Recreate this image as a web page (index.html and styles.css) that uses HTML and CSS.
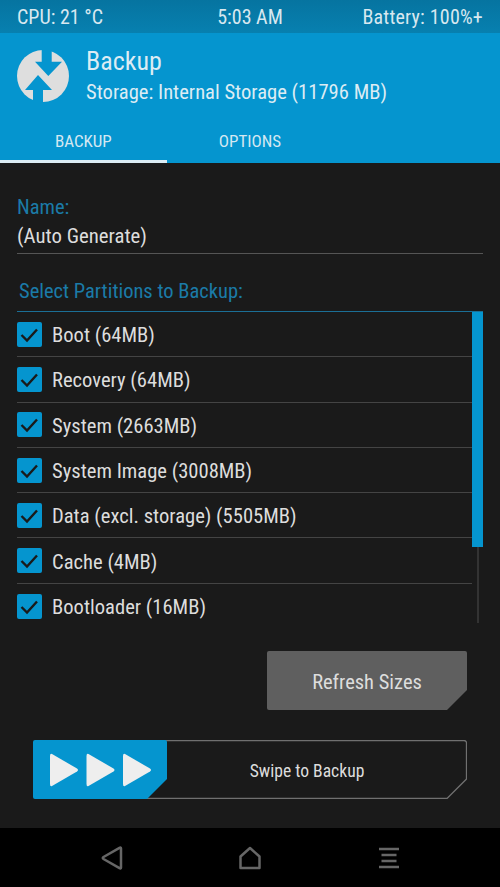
FILE: index.html
```html
<!DOCTYPE html>
<html lang="en">

<head>
    <meta charset="UTF-8">
    <title>TWRP Backup</title>
    <link rel="stylesheet" href="styles.css">
</head>

<body>
    <div class="app">

        <!-- Status bar -->
        <div class="status-bar">
            <span class="status-cell">CPU: 21 °C</span>
            <span class="status-cell status-center">5:03 AM</span>
            <span class="status-cell status-right">Battery: 100%+</span>
        </div>

        <!-- Header -->
        <div class="header">
            <svg class="logo" viewBox="0 0 52 52">
                <circle cx="26" cy="26" r="26" fill="#dedede" />
                <path d="M24.700 -1H34.700V11.700H45L31.300 26 18 11.700H24.700Z" fill="#0595cf" />
                <path d="M16 53H26V40H35L21 25 8 40H16Z" fill="#0595cf" />
            </svg>
            <div class="header-text">
                <div class="header-title">Backup</div>
                <div class="header-sub">Storage: Internal Storage (11796 MB)</div>
            </div>
        </div>

        <!-- Tabs -->
        <div class="tabs">
            <div class="tab tab-active">BACKUP</div>
            <div class="tab">OPTIONS</div>
            <div class="tab"></div>
        </div>

        <!-- Content -->
        <div class="content">
            <div class="field-label">Name:</div>
            <div class="field-value">(Auto Generate)</div>

            <div class="list-title">Select Partitions to Backup:</div>

            <div class="list">
                <div class="rows">
                    <div class="row">
                        <svg class="check" viewBox="0 0 25 25"><rect width="25" height="25" rx="2" fill="#0595cf" /><path d="M4.500 13l5.500 5.500L20 7.500" fill="none" stroke="#1a1a1a" stroke-width="2.400" /></svg>
                        <span>Boot (64MB)</span>
                    </div>
                    <div class="row">
                        <svg class="check" viewBox="0 0 25 25"><rect width="25" height="25" rx="2" fill="#0595cf" /><path d="M4.500 13l5.500 5.500L20 7.500" fill="none" stroke="#1a1a1a" stroke-width="2.400" /></svg>
                        <span>Recovery (64MB)</span>
                    </div>
                    <div class="row">
                        <svg class="check" viewBox="0 0 25 25"><rect width="25" height="25" rx="2" fill="#0595cf" /><path d="M4.500 13l5.500 5.500L20 7.500" fill="none" stroke="#1a1a1a" stroke-width="2.400" /></svg>
                        <span>System (2663MB)</span>
                    </div>
                    <div class="row">
                        <svg class="check" viewBox="0 0 25 25"><rect width="25" height="25" rx="2" fill="#0595cf" /><path d="M4.500 13l5.500 5.500L20 7.500" fill="none" stroke="#1a1a1a" stroke-width="2.400" /></svg>
                        <span>System Image (3008MB)</span>
                    </div>
                    <div class="row">
                        <svg class="check" viewBox="0 0 25 25"><rect width="25" height="25" rx="2" fill="#0595cf" /><path d="M4.500 13l5.500 5.500L20 7.500" fill="none" stroke="#1a1a1a" stroke-width="2.400" /></svg>
                        <span>Data (excl. storage) (5505MB)</span>
                    </div>
                    <div class="row">
                        <svg class="check" viewBox="0 0 25 25"><rect width="25" height="25" rx="2" fill="#0595cf" /><path d="M4.500 13l5.500 5.500L20 7.500" fill="none" stroke="#1a1a1a" stroke-width="2.400" /></svg>
                        <span>Cache (4MB)</span>
                    </div>
                    <div class="row row-last">
                        <svg class="check" viewBox="0 0 25 25"><rect width="25" height="25" rx="2" fill="#0595cf" /><path d="M4.500 13l5.500 5.500L20 7.500" fill="none" stroke="#1a1a1a" stroke-width="2.400" /></svg>
                        <span>Bootloader (16MB)</span>
                    </div>
                </div>
                <div class="scroll-track">
                    <div class="scroll-thumb"></div>
                    <div class="scroll-rest"></div>
                </div>
            </div>

            <div class="actions">
                <div class="refresh-btn">Refresh Sizes</div>
            </div>

            <div class="swipe">
                <svg class="swipe-outline" viewBox="0 0 434 59">
                    <path d="M4 .5H431a2.500 2.500 0 0 1 2.500 2.500V39L414 58.500H4Z" fill="none" stroke="#707070" stroke-width="1.300" />
                </svg>
                <div class="swipe-thumb">
                    <svg class="arrows" viewBox="0 0 102 36">
                        <path d="M2 2L27 16.500Q29 18 27 19.500L2 34Q0 35 0 32V4Q0 1 2 2Z" fill="#eee" />
                        <path d="M38.500 2L63.500 16.500Q65.500 18 63.500 19.500L38.500 34Q36.500 35 36.500 32V4Q36.500 1 38.500 2Z" fill="#eee" />
                        <path d="M75 2L100 16.500Q102 18 100 19.500L75 34Q73 35 73 32V4Q73 1 75 2Z" fill="#eee" />
                    </svg>
                </div>
                <div class="swipe-label">Swipe to Backup</div>
            </div>
        </div>

        <!-- Navigation -->
        <div class="nav">
            <svg class="nav-icon" viewBox="0 0 24 24"><path d="M21 2.500V21.500Q21 23 19.500 22.200L3.500 13Q2 12 3.500 11L19.500 1.800Q21 1 21 2.500Z" fill="none" stroke="#666" stroke-width="2.500" stroke-linejoin="round" /></svg>
            <svg class="nav-icon" viewBox="0 0 24 24"><path d="M12 2L21.500 10.500V22H2.500V10.500Z" fill="none" stroke="#666" stroke-width="2.500" stroke-linejoin="round" /></svg>
            <svg class="nav-icon" viewBox="0 0 24 24"><path d="M2 3H22M4.500 9H19.500M4.500 15H19.500M2 21H22" fill="none" stroke="#666" stroke-width="2.500" /></svg>
        </div>

    </div>
</body>

</html>
```

FILE: styles.css
```css
body {
    margin: 0;
    background-color: #1a1a1a;
    font-family: Roboto, "Liberation Sans", sans-serif;
    font-stretch: 85%;
}

.app {
    width: 500px;
    height: 887px;
    display: flex;
    flex-direction: column;
    overflow: hidden;
}

.status-bar {
    height: 33px;
    padding: 0 17px;
    display: flex;
    align-items: center;
    background: linear-gradient(#0674a0, #0780b0);
    color: #d8e8f0;
    font-size: 20px;
}

.status-cell {
    flex: 1;
}

.status-center {
    text-align: center;
}

.status-right {
    text-align: right;
    letter-spacing: 0.2px;
}

.header {
    height: 86px;
    padding-left: 17px;
    display: flex;
    align-items: center;
    gap: 17px;
    background-color: #0595cf;
    color: #dcecf4;
}

.logo {
    width: 52px;
    height: 52px;
}

.header-title {
    font-size: 26px;
    line-height: 32px;
}

.header-sub {
    font-size: 20.600px;
    line-height: 30px;
}

.tabs {
    height: 44px;
    display: flex;
    background-color: #0595cf;
    color: #d4e8f2;
    font-size: 17px;
}

.tab {
    flex: 1;
    display: flex;
    align-items: center;
    justify-content: center;
    box-sizing: border-box;
}

.tab-active {
    border-bottom: 3px solid #dcecf4;
    padding-top: 3px;
}

.content {
    flex: 1;
    padding: 0 17px;
    position: relative;
}

.field-label {
    margin-top: 32px;
    color: #1b7ba8;
    font-size: 20.500px;
    line-height: 24px;
}

.field-value {
    height: 35px;
    line-height: 34px;
    border-bottom: 1px solid #555;
    color: #ddd;
    font-size: 20.800px;
    box-sizing: border-box;
}

.list-title {
    margin: 25px 0 8px 2px;
    color: #1b7ba8;
    font-size: 20.500px;
    line-height: 24px;
}

.list {
    display: flex;
    border-top: 1px solid #1b6f96;
}

.rows {
    flex: 1;
}

.row {
    height: 45.300px;
    box-sizing: border-box;
    display: flex;
    align-items: center;
    gap: 10px;
    border-bottom: 1px solid #444;
    color: #ddd;
    font-size: 20.600px;
}

.row span {
    padding-top: 2px;
}

.row-last {
    border-bottom: none;
}

.check {
    width: 25px;
    height: 25px;
}

.scroll-track {
    width: 11px;
    display: flex;
    flex-direction: column;
    align-items: center;
}

.scroll-thumb {
    width: 11px;
    height: 235px;
    background-color: #0595cf;
}

.scroll-rest {
    width: 2px;
    height: 76px;
    background-color: #333;
}

.actions {
    display: flex;
    justify-content: flex-end;
    margin-top: 22px;
    padding-right: 16px;
}

.refresh-btn {
    width: 200px;
    height: 59px;
    padding-top: 2px;
    box-sizing: border-box;
    display: flex;
    align-items: center;
    justify-content: center;
    background-color: #5f5f5f;
    color: #ddd;
    font-size: 20.500px;
    border-radius: 2px;
    clip-path: polygon(0 0, 100% 0, 100% 39px, 180px 100%, 0 100%);
}

.swipe {
    position: relative;
    height: 59px;
    margin: 30px 16px 0;
    display: flex;
    align-items: center;
}

.swipe-outline {
    position: absolute;
    top: 0;
    left: 0;
    width: 434px;
    height: 59px;
}

.swipe-thumb {
    position: relative;
    width: 134px;
    height: 59px;
    display: flex;
    align-items: center;
    padding-left: 17px;
    box-sizing: border-box;
    background-color: #0595cf;
    border-radius: 2px;
    clip-path: polygon(0 0, 100% 0, 100% 39px, 114px 100%, 0 100%);
}

.arrows {
    width: 102px;
    height: 36px;
}

.swipe-label {
    flex: 1;
    padding: 2px 20px 0 0;
    text-align: center;
    color: #ddd;
    font-size: 17.600px;
    position: relative;
}

.nav {
    height: 59px;
    background-color: #000;
    display: flex;
    align-items: center;
    justify-content: center;
    gap: 114.500px;
}

.nav-icon {
    width: 24px;
    height: 24px;
}
```
